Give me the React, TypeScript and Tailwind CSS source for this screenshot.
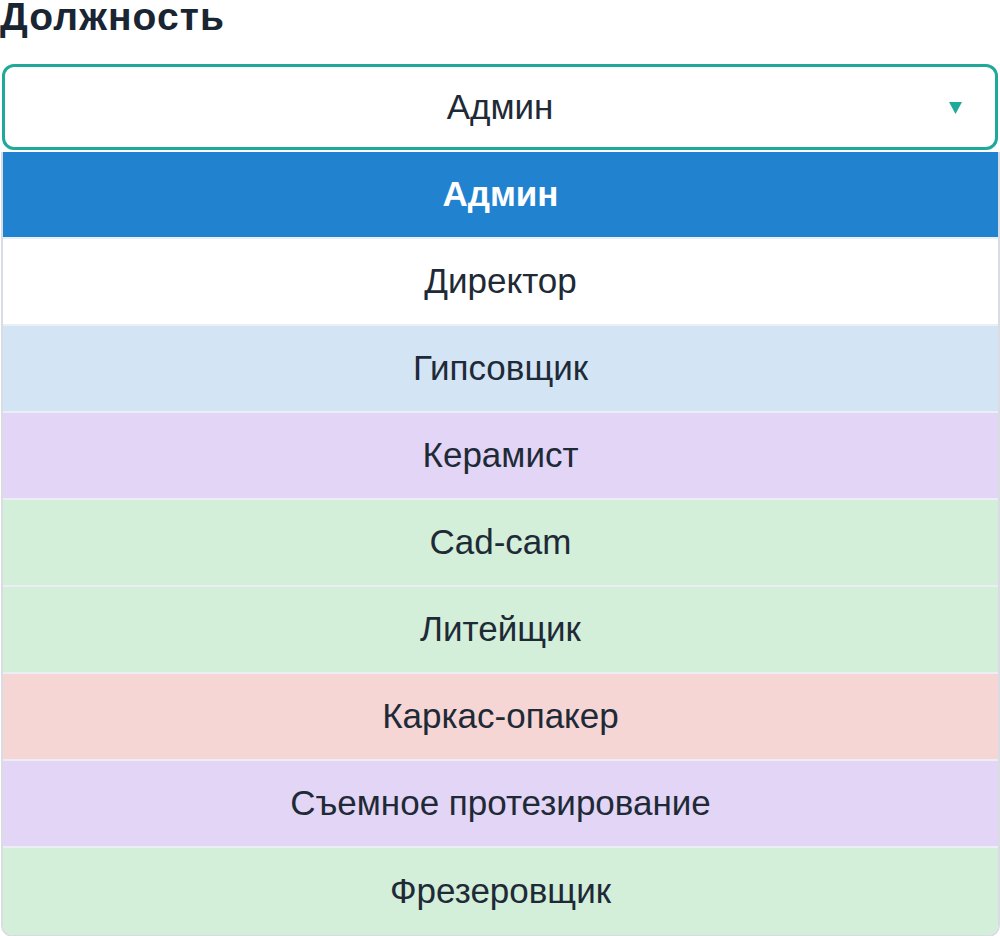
import React from 'react';

type Option = {
  label: string;
  bg: string;
  selected?: boolean;
};

const options: Option[] = [
  { label: 'Админ', bg: 'bg-[#2183d0]', selected: true },
  { label: 'Директор', bg: 'bg-white' },
  { label: 'Гипсовщик', bg: 'bg-[#d3e4f5]' },
  { label: 'Керамист', bg: 'bg-[#e3d5f6]' },
  { label: 'Cad-cam', bg: 'bg-[#d3eed9]' },
  { label: 'Литейщик', bg: 'bg-[#d3eed9]' },
  { label: 'Каркас-опакер', bg: 'bg-[#f6d5d5]' },
  { label: 'Съемное протезирование', bg: 'bg-[#e3d5f6]' },
  { label: 'Фрезеровщик', bg: 'bg-[#d3eed9]' },
];

const App: React.FC = () => {
  return (
    <div
      className="w-[1000px] h-[936px] bg-white overflow-hidden text-[#1f2a37]"
      style={{ fontFamily: '"Liberation Sans", Arial, sans-serif' }}
    >
      <h2 className="text-[39px] font-bold leading-[34px] tracking-[1.1px] mb-[30px] text-[#1a2533]">
        Должность
      </h2>

      <div className="mx-[2px] h-[86px] rounded-[12px] border-[3px] border-[#1fa99a] flex items-center relative">
        <span className="flex-1 text-center text-[35px] text-[#1f2a37]">Админ</span>
        <svg
          className="absolute right-[33px] top-1/2 -translate-y-1/2 mt-[1px]"
          width="13"
          height="12"
          viewBox="0 0 13 12"
        >
          <path d="M0 0h13L6.5 12z" fill="#1fa99a" />
        </svg>
      </div>

      <div className="mt-[2px] ml-[1px] border-2 border-t-0 border-[#d9dce2] rounded-b-[12px] overflow-hidden">
        {options.map((opt, i) => (
          <div
            key={opt.label}
            className={`h-[87px] flex items-center justify-center ${opt.bg} ${
              i < options.length - 1 ? 'border-b-2 border-[#ebeef4]' : ''
            }`}
          >
            <span
              className={`text-[35px] ${
                opt.selected ? 'font-bold text-white' : 'text-[#1f2a37]'
              }`}
            >
              {opt.label}
            </span>
          </div>
        ))}
      </div>
    </div>
  );
};

export default App;
